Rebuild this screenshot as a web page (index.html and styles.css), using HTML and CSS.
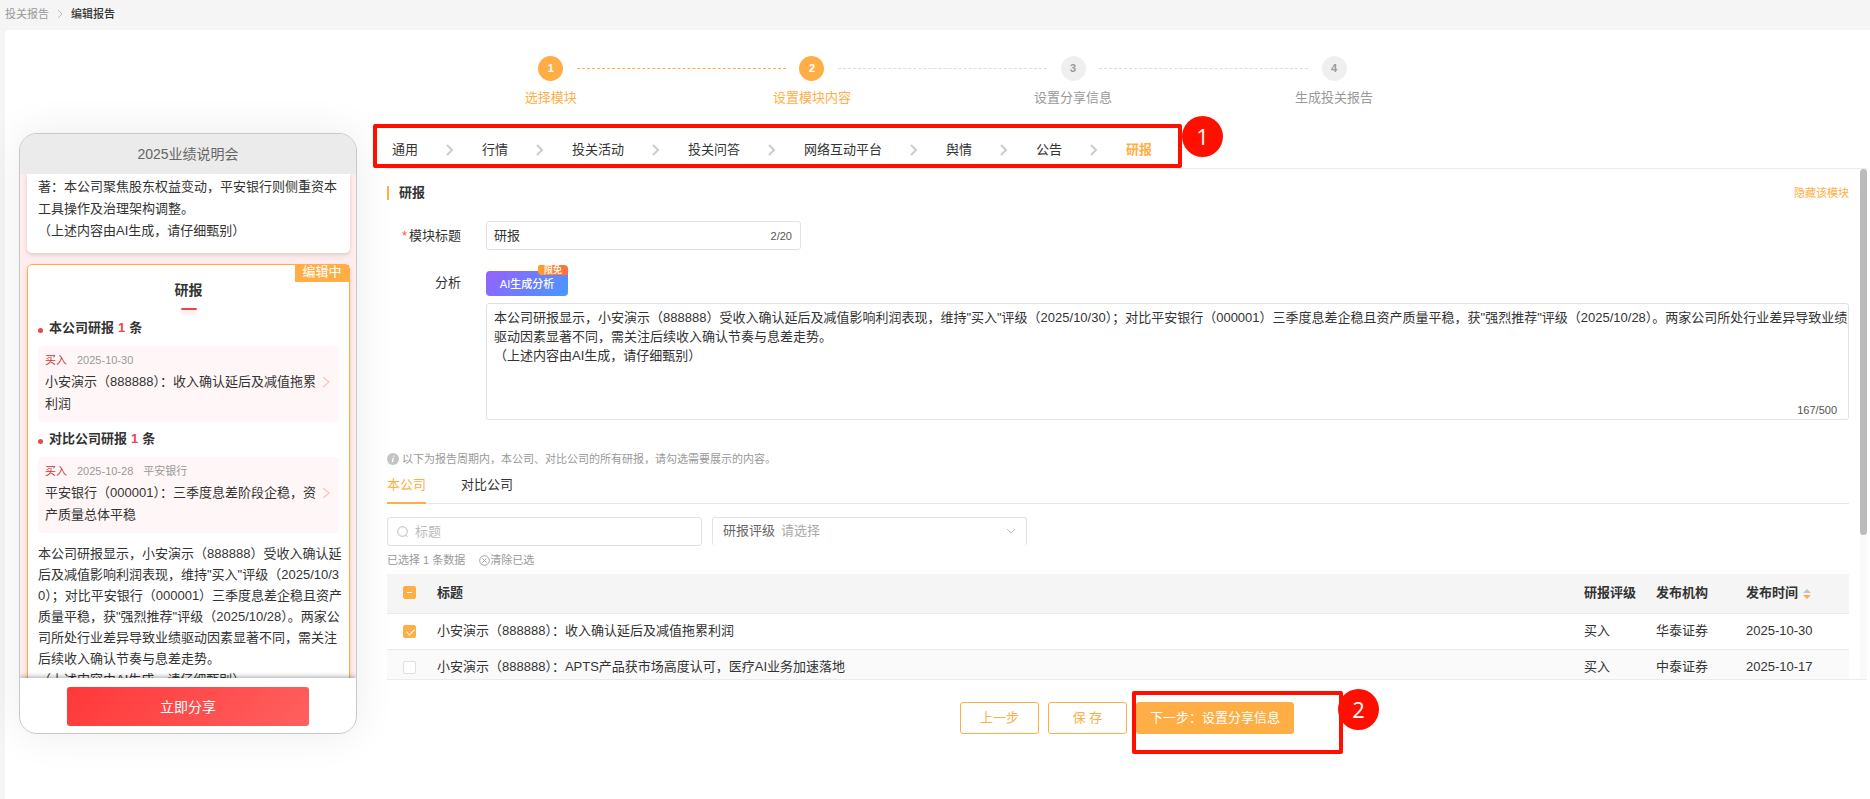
FILE: index.html
```html
<!DOCTYPE html>
<html lang="zh-CN">
<head>
    <meta charset="UTF-8">
    <meta name="viewport" content="width=device-width, initial-scale=1.0">
    <title>编辑报告</title>
    <link rel="stylesheet" href="styles.css">
</head>
<body>

    <nav class="breadcrumb">
        <a href="#">投关报告</a>
        <svg width="6" height="10" viewBox="0 0 6 10"><path d="M1 1l4 4-4 4" fill="none" stroke="#bbb"/></svg>
        <span class="current">编辑报告</span>
    </nav>

    <div class="panel">
        <!-- Steps -->
        <ol class="steps">
            <li class="step done"><span class="step-num">1</span><span class="step-name">选择模块</span></li>
            <li class="step active"><span class="step-num">2</span><span class="step-name">设置模块内容</span></li>
            <li class="step"><span class="step-num">3</span><span class="step-name">设置分享信息</span></li>
            <li class="step"><span class="step-num">4</span><span class="step-name">生成投关报告</span></li>
        </ol>

        <div class="columns">
            <!-- Phone preview -->
            <aside class="phone">
                <div class="phone-title">2025业绩说明会</div>
                <div class="phone-body">
                    <div class="card card-prev">
                        <p>著：本公司聚焦股东权益变动，平安银行则侧重资本工具操作及治理架构调整。<br>（上述内容由AI生成，请仔细甄别）</p>
                    </div>
                    <div class="card card-editing">
                        <span class="editing-tag">编辑中</span>
                        <h2>研报</h2>
                        <h3>本公司研报 <em>1</em> 条</h3>
                        <div class="report">
                            <div class="report-text">
                                <div class="report-meta"><b>买入</b><span>2025-10-30</span></div>
                                <div>小安演示（888888）：收入确认延后及减值拖累利润</div>
                            </div>
                            <svg width="8" height="12" viewBox="0 0 8 12"><path d="M1 1l6 5-6 5" fill="none" stroke="#ffc4c4" stroke-width="1.4"/></svg>
                        </div>
                        <h3>对比公司研报 <em>1</em> 条</h3>
                        <div class="report">
                            <div class="report-text">
                                <div class="report-meta"><b>买入</b><span>2025-10-28</span><span>平安银行</span></div>
                                <div>平安银行（000001）：三季度息差阶段企稳，资产质量总体平稳</div>
                            </div>
                            <svg width="8" height="12" viewBox="0 0 8 12"><path d="M1 1l6 5-6 5" fill="none" stroke="#ffc4c4" stroke-width="1.4"/></svg>
                        </div>
                        <p>本公司研报显示，小安演示（888888）受收入确认延后及减值影响利润表现，维持"买入"评级（2025/10/30）；对比平安银行（000001）三季度息差企稳且资产质量平稳，获"强烈推荐"评级（2025/10/28）。两家公司所处行业差异导致业绩驱动因素显著不同，需关注后续收入确认节奏与息差走势。<br>（上述内容由AI生成，请仔细甄别）</p>
                    </div>
                </div>
                <div class="phone-footer">
                    <button type="button" class="share-btn">立即分享</button>
                </div>
            </aside>

            <!-- Editor -->
            <main class="editor">
                <nav class="modules">
                    <a href="#">通用</a>
                    <svg class="arrow" viewBox="0 0 8 12"><path d="M1 1l5 5-5 5"/></svg>
                    <a href="#">行情</a>
                    <svg class="arrow" viewBox="0 0 8 12"><path d="M1 1l5 5-5 5"/></svg>
                    <a href="#">投关活动</a>
                    <svg class="arrow" viewBox="0 0 8 12"><path d="M1 1l5 5-5 5"/></svg>
                    <a href="#">投关问答</a>
                    <svg class="arrow" viewBox="0 0 8 12"><path d="M1 1l5 5-5 5"/></svg>
                    <a href="#">网络互动平台</a>
                    <svg class="arrow" viewBox="0 0 8 12"><path d="M1 1l5 5-5 5"/></svg>
                    <a href="#">舆情</a>
                    <svg class="arrow" viewBox="0 0 8 12"><path d="M1 1l5 5-5 5"/></svg>
                    <a href="#">公告</a>
                    <svg class="arrow" viewBox="0 0 8 12"><path d="M1 1l5 5-5 5"/></svg>
                    <a href="#" class="active">研报</a>
                    <div class="mark mark-modules"><span class="mark-num">1</span></div>
                </nav>

                <div class="scroll-area">
                    <div class="scroll-content">
                        <div class="section-head">
                            <h2>研报</h2>
                            <a href="#">隐藏该模块</a>
                        </div>

                        <div class="form-row">
                            <label class="form-label required" for="moduleTitle">模块标题</label>
                            <div class="input-box">
                                <input type="text" id="moduleTitle" value="研报">
                                <span class="count">2/20</span>
                            </div>
                        </div>

                        <div class="form-row form-row-analysis">
                            <label class="form-label" for="analysis">分析</label>
                            <div class="analysis">
                                <button type="button" class="ai-btn">AI生成分析<span class="free-tag">限免</span></button>
                                <div class="textarea-box">
                                    <textarea id="analysis">本公司研报显示，小安演示（888888）受收入确认延后及减值影响利润表现，维持"买入"评级（2025/10/30）；对比平安银行（000001）三季度息差企稳且资产质量平稳，获"强烈推荐"评级（2025/10/28）。两家公司所处行业差异导致业绩驱动因素显著不同，需关注后续收入确认节奏与息差走势。
（上述内容由AI生成，请仔细甄别）</textarea>
                                    <span class="count">167/500</span>
                                </div>
                            </div>
                        </div>

                        <p class="hint">
                            <svg width="12" height="12" viewBox="0 0 12 12"><circle cx="6" cy="6" r="6" fill="#c4c4c4"/><path d="M6.9 2.6l-.2 1M6.3 4.8L5.4 9.2" stroke="#fff" stroke-width="1.3"/></svg>
                            以下为报告周期内，本公司、对比公司的所有研报，请勾选需要展示的内容。
                        </p>

                        <nav class="tabs">
                            <a href="#" class="active">本公司</a>
                            <a href="#">对比公司</a>
                        </nav>

                        <div class="filters">
                            <div class="filter filter-search">
                                <svg width="12" height="12" viewBox="0 0 12 12" fill="none" stroke="#bbb"><circle cx="5.5" cy="5.5" r="4.8"/><path d="M8.5 9l2 2.2"/></svg>
                                <input type="text" placeholder="标题" aria-label="标题">
                            </div>
                            <div class="filter filter-rating">
                                <label for="rating">研报评级</label>
                                <select id="rating"><option>请选择</option></select>
                                <svg width="10" height="6" viewBox="0 0 10 6"><path d="M1 1l4 4 4-4" fill="none" stroke="#bbb"/></svg>
                            </div>
                        </div>

                        <div class="selected">
                            <span>已选择 1 条数据</span>
                            <button type="button">
                                <svg width="11" height="11" viewBox="0 0 11 11" fill="none" stroke="#999" stroke-width=".9"><circle cx="5.5" cy="5.5" r="4.8"/><path d="M3.4 3.4l4.2 4.2M7.6 3.4L3.4 7.6"/></svg>清除已选
                            </button>
                        </div>

                        <table class="reports">
                            <colgroup>
                                <col class="col-check"><col><col class="col-rating"><col class="col-org"><col class="col-date">
                            </colgroup>
                            <thead>
                                <tr>
                                    <th><input type="checkbox" class="partial" aria-label="全选"></th>
                                    <th>标题</th>
                                    <th>研报评级</th>
                                    <th>发布机构</th>
                                    <th>发布时间<svg class="sort" width="8" height="12" viewBox="0 0 8 12"><path d="M0 5l4-4 4 4z" fill="#c0c4cc"/><path d="M0 7l4 4 4-4z" fill="#ffae45"/></svg></th>
                                </tr>
                            </thead>
                            <tbody>
                                <tr>
                                    <td><input type="checkbox" id="row1" checked></td>
                                    <td><label for="row1">小安演示（888888）：收入确认延后及减值拖累利润</label></td>
                                    <td>买入</td>
                                    <td>华泰证券</td>
                                    <td>2025-10-30</td>
                                </tr>
                                <tr>
                                    <td><input type="checkbox" id="row2"></td>
                                    <td><label for="row2">小安演示（888888）：APTS产品获市场高度认可，医疗AI业务加速落地</label></td>
                                    <td>买入</td>
                                    <td>中泰证券</td>
                                    <td>2025-10-17</td>
                                </tr>
                            </tbody>
                        </table>
                    </div>
                    <div class="scrollbar"><div class="thumb"></div></div>
                </div>

                <div class="actions">
                    <button type="button" class="btn">上一步</button>
                    <button type="button" class="btn">保 存</button>
                    <div class="next">
                        <button type="button" class="btn btn-primary">下一步：设置分享信息</button>
                        <div class="mark mark-next"><span class="mark-num">2</span></div>
                    </div>
                </div>
            </main>
        </div>
    </div>

</body>
</html>
```
FILE: styles.css
```css
/* General */
* {
    box-sizing: border-box;
}

body {
    margin: 0;
    min-height: 100vh;
    display: flex;
    flex-direction: column;
    background: #f5f5f5;
    color: #333;
    font-family: "Liberation Sans", "Noto Sans CJK SC", sans-serif;
    font-size: 13px;
    line-height: 20px;
}

a {
    color: inherit;
    text-decoration: none;
}

h2, h3, p, ol {
    margin: 0;
    padding: 0;
}

button, input, select, textarea {
    font: inherit;
    color: inherit;
}

/* Breadcrumb */
.breadcrumb {
    display: flex;
    align-items: center;
    gap: 8px;
    height: 30px;
    padding: 0 5px 2px;
    font-size: 11px;
    color: #999;
}

.breadcrumb .current {
    color: #333;
    font-weight: 500;
}

.panel {
    flex: 1;
    margin-left: 5px;
    background: #fff;
    border-radius: 4px 0 0 0;
}

/* Steps */
.steps {
    box-sizing: content-box;
    display: flex;
    width: 56%;
    height: 68px;
    margin: 0 auto;
    padding: 26px 0 0 10px;
    list-style: none;
    color: #999;
}

.step {
    position: relative;
    flex: 1;
    display: flex;
    flex-direction: column;
    align-items: center;
    gap: 7px;
}

.step:not(:last-child)::after {
    content: "";
    position: absolute;
    top: 12px;
    left: calc(50% + 26px);
    right: calc(26px - 50%);
    border-top: 1px dashed #ddd;
}

.step-num {
    width: 25px;
    height: 25px;
    border-radius: 50%;
    background: #efefef;
    font-size: 11px;
    font-weight: bold;
    line-height: 25px;
    text-align: center;
}

.step.done, .step.active {
    color: #ffae45;
}

.step.done::after {
    border-color: #ffae45;
}

.done .step-num, .active .step-num {
    background: #ffae45;
    color: #fff;
}

/* Columns */
.columns {
    display: flex;
    gap: 30px;
    padding-left: 14px;
}

/* Phone preview */
.phone {
    flex: none;
    display: flex;
    flex-direction: column;
    width: 338px;
    height: calc(100vh - 198px);
    margin-top: 9px;
    border: 1px solid #c8c8c8;
    border-radius: 18px;
    background: #ffeded;
    box-shadow: 0 0 40px rgba(0, 0, 0, 0.08);
    overflow: hidden;
}

.phone-title {
    height: 40px;
    background: #ebebeb;
    color: #666;
    font-size: 14px;
    line-height: 40px;
    text-align: center;
}

.phone-body {
    flex: 1;
    min-height: 0;
    padding: 0 6px 0 7px;
    overflow: hidden;
    line-height: 22px;
    word-break: break-all;
}

.card {
    padding: 0 10px;
    border: 1px solid #fff;
    border-radius: 5px;
    background: #fff;
    box-shadow: 0 2px 4px rgba(0, 0, 0, 0.15);
}

/* long text runs a little past the report boxes */
.card p {
    margin-right: -5px;
}

.card-prev {
    height: 79px;
    margin-bottom: 11px;
    padding-top: 2px;
    border-top: none;
    border-radius: 0 0 5px 5px;
}

.card-editing {
    position: relative;
    border-color: #ffae45;
}

.editing-tag {
    position: absolute;
    top: 0;
    right: 0;
    width: 54px;
    height: 17px;
    background: #ffae45;
    color: #fff;
    line-height: 13px;
    text-align: center;
    overflow: hidden;
}

.card-editing h2 {
    padding-top: 14px;
    font-size: 14px;
    font-weight: bold;
    text-align: center;
}

.card-editing h2::after {
    content: "";
    display: block;
    width: 16px;
    height: 2px;
    margin: 7px auto;
    border-radius: 1px;
    background: #e5484d;
    box-shadow: 0 2px 4px rgba(229, 72, 77, 0.3);
}

.card-editing h3 {
    display: flex;
    align-items: center;
    gap: 4px;
    font-size: 13px;
}

.card-editing h3::before {
    content: "";
    width: 5px;
    height: 5px;
    margin: 4px 2px 0 0;
    border-radius: 50%;
    background: #e5484d;
}

.card-editing h3 em {
    color: #e5484d;
    font-style: normal;
}

.report {
    display: flex;
    align-items: center;
    margin: 7px 0 6px;
    padding: 3px 9px 7px 7px;
    border-radius: 4px;
    background: #fff7f7;
}

.report-text {
    flex: 1;
}

.report-meta {
    display: flex;
    gap: 10px;
    color: #999;
    font-size: 11px;
}

.report-meta b {
    color: #c9353a;
    font-weight: normal;
}

.report + p {
    margin-top: 10px;
    line-height: 21px;
}

.phone-footer {
    position: relative;
    height: 55px;
    padding: 9px 0;
    background: #fff;
    box-shadow: 0 -1px 5px rgba(0, 0, 0, 0.35);
    text-align: center;
}

.share-btn {
    width: 72%;
    height: 39px;
    border: none;
    border-radius: 3px;
    background: linear-gradient(135deg, #ff3838, #ff6060);
    color: #fff;
    font-size: 14px;
}

/* Module navigation */
.editor {
    flex: 1;
    min-width: 0;
    padding-right: 3px;
}

.modules {
    position: relative;
    display: flex;
    align-items: center;
    gap: 28px;
    height: 45px;
    padding: 7px 5px 0;
    border-bottom: 1px solid #ebebeb;
}

.arrow {
    width: 8px;
    height: 12px;
    fill: none;
    stroke: #ccc;
    stroke-width: 2;
}

.modules .active {
    color: #ffae45;
    font-weight: bold;
}

/* Red marks */
.mark {
    position: absolute;
    border: 4px solid #ff0f00;
    border-radius: 2px;
    pointer-events: none;
}

.mark-modules {
    top: 0;
    left: -14px;
    width: 809px;
    height: 44px;
}

.mark-next {
    top: -11px;
    left: -4px;
    width: 211px;
    height: 63px;
}

.mark-num {
    position: absolute;
    top: -12px;
    left: 100%;
    width: 41px;
    height: 41px;
    margin-left: 4px;
    border-radius: 50%;
    background: #ff0f00;
    color: #fff;
    font-family: "Open Sans", sans-serif;
    font-size: 22px;
    line-height: 41px;
    text-align: center;
}

.mark-next .mark-num {
    top: -6px;
    margin-left: -1px;
}

/* Scrolling form */
.scroll-area {
    display: flex;
    height: calc(100vh - 288px);
    border-bottom: 1px solid #ebebeb;
    overflow: hidden;
}

.scroll-content {
    flex: 1;
    min-width: 0;
    padding: 14px 11px 0 0;
}

.scrollbar {
    width: 7px;
    background: #fafafa;
}

.thumb {
    height: 366px;
    border-radius: 4px;
    background: #bbb;
}

.section-head {
    display: flex;
    justify-content: space-between;
    align-items: center;
}

.section-head h2 {
    display: flex;
    align-items: center;
    gap: 10px;
    font-size: 13px;
}

.section-head h2::before {
    content: "";
    width: 2px;
    height: 14px;
    background: #ffae45;
}

.section-head a {
    color: #ffae45;
    font-size: 11px;
}

.form-row {
    display: flex;
    gap: 25px;
    margin-top: 18px;
}

.form-label {
    width: 74px;
    line-height: 29px;
    text-align: right;
}

.required::before {
    content: "*";
    margin-right: 2px;
    color: #ff4d4f;
}

.input-box {
    display: flex;
    align-items: center;
    width: 315px;
    height: 29px;
    padding: 0 8px 0 7px;
    border: 1px solid #e2e2e2;
    border-radius: 3px;
}

.input-box input, .filter input {
    flex: 1;
    min-width: 0;
    padding: 0;
    border: none;
    outline: none;
    background: none;
}

.count {
    color: #555;
    font-size: 11px;
}

.form-row-analysis .form-label {
    line-height: 24px;
}

.form-row-analysis {
    margin-top: 21px;
}

.analysis {
    flex: 1;
    min-width: 0;
}

.ai-btn {
    position: relative;
    display: block;
    width: 82px;
    height: 25px;
    padding: 0;
    border: none;
    border-radius: 4px;
    background: linear-gradient(135deg, #9760ff, #4798ff);
    color: #fff;
    font-size: 11px;
    font-weight: 500;
}

.free-tag {
    position: absolute;
    top: -6px;
    right: 0;
    width: 30px;
    height: 10px;
    border-radius: 2px 4px 0 4px;
    background: linear-gradient(90deg, #ffa22a, #ff6c40);
    font-size: 9px;
    line-height: 10px;
}

.textarea-box {
    position: relative;
    margin-top: 7px;
}

.textarea-box textarea {
    display: block;
    width: 100%;
    height: 117px;
    padding: 4px 0 4px 7px;
    border: 1px solid #e2e2e2;
    border-radius: 3px;
    outline: none;
    line-height: 19px;
    resize: none;
    overflow: hidden;
}

.textarea-box .count {
    position: absolute;
    right: 12px;
    bottom: 0;
}

/* Report list */
.hint {
    display: flex;
    align-items: center;
    gap: 3px;
    margin-top: 29px;
    color: #999;
    font-size: 11px;
}

.tabs {
    display: flex;
    gap: 35px;
    height: 35px;
    border-bottom: 1px solid #e4e7ed;
    line-height: 32px;
}

.tabs a {
    height: 35px;
}

.tabs .active {
    border-bottom: 2px solid #ffae45;
    color: #ffae45;
}

.filters {
    display: flex;
    gap: 10px;
    margin-top: 13px;
}

.filter {
    display: flex;
    align-items: center;
    width: 315px;
    height: 29px;
    padding: 0 10px;
    border: 1px solid #e2e2e2;
    border-radius: 3px;
}

.filter-search {
    gap: 6px;
    padding: 0 9px;
}

.filter input::placeholder {
    color: #bbb;
}

.filter-rating {
    height: 28px;
    padding-bottom: 2px;
    border-bottom: none;
    color: #666;
}

.filter select {
    flex: 1;
    padding: 0 0 0 6px;
    border: none;
    outline: none;
    background: none;
    color: #aaa;
    appearance: none;
}

.selected {
    display: flex;
    gap: 14px;
    margin-top: 4px;
    color: #999;
    font-size: 11px;
}

.selected button {
    display: flex;
    align-items: center;
    padding: 0;
    border: none;
    background: none;
}

.reports {
    width: 100%;
    margin-top: 4px;
    border-collapse: collapse;
    table-layout: fixed;
    text-align: left;
}

.reports th, .reports td {
    height: 36px;
    padding: 0;
    border-bottom: 1px solid #ebebeb;
}

.reports th {
    height: 39px;
    padding-bottom: 1px;
    background: #f5f5f5;
}

.reports tbody tr:nth-child(even) {
    background: #fafafa;
}

.reports th:first-child, .reports td:first-child {
    padding-left: 16px;
}

.col-check {
    width: 50px;
}

.col-rating {
    width: 72px;
}

.col-org {
    width: 90px;
}

.col-date {
    width: 103px;
}

.sort {
    margin-left: 5px;
    vertical-align: -3px;
}

.reports input {
    display: block;
    position: relative;
    width: 13px;
    height: 13px;
    margin: 0;
    border: 1px solid #dcdfe6;
    border-radius: 2px;
    background: #fff;
    appearance: none;
}

.reports input:checked, .reports .partial {
    border-color: #ffae45;
    background: #ffae45;
}

.reports input:checked::before {
    content: "";
    position: absolute;
    top: 1px;
    left: 4px;
    width: 4px;
    height: 7px;
    border: solid #fff;
    border-width: 0 1px 1px 0;
    transform: rotate(45deg);
}

.reports .partial::before {
    content: "";
    position: absolute;
    top: 5px;
    left: 3px;
    width: 5px;
    height: 1px;
    background: #fff;
}

/* Bottom buttons */
.actions {
    display: flex;
    justify-content: center;
    gap: 9px;
    padding-top: 22px;
}

.btn {
    min-width: 79px;
    height: 32px;
    padding: 0 13px;
    border: 1px solid #ffae45;
    border-radius: 3px;
    background: #fff;
    color: #ffae45;
}

.btn-primary {
    background: #ffae45;
    color: #fff;
}

.next {
    position: relative;
}
```
